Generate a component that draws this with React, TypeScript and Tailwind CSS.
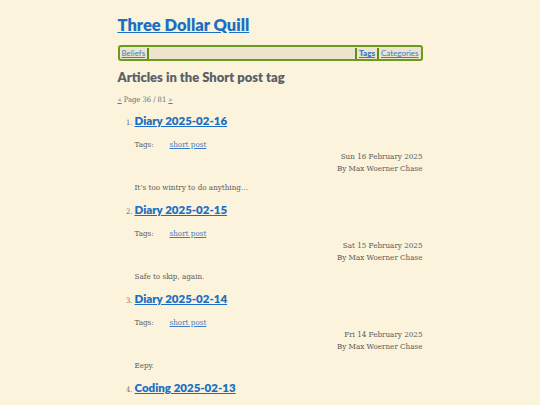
const posts = [
  { title: "Diary 2025-02-16", date: "Sun 16 February 2025", summary: "It’s too wintry to do anything…" },
  { title: "Diary 2025-02-15", date: "Sat 15 February 2025", summary: "Safe to skip, again." },
  { title: "Diary 2025-02-14", date: "Fri 14 February 2025", summary: "Eepy." },
  { title: "Coding 2025-02-13", date: "Thu 13 February 2025", summary: "Something." },
];

const head = { fontFamily: "Lato, 'Open Sans', sans-serif" };
const body = { fontFamily: "'DejaVu Serif', 'Liberation Serif', serif" };

export default function App() {
  return (
    <div className="min-h-[405px] bg-[#fbf3dc] text-[#585c60]">
      <div className="mx-auto w-[305px] pt-[14px]">
        {/* Site title */}
        <h1 style={head} className="text-[16.5px] leading-[22px] font-extrabold">
          <a href="#" className="text-[#1a6fc4] underline">Three Dollar Quill</a>
        </h1>

        {/* Nav */}
        <nav
          style={head}
          className="mt-[9px] flex items-center h-[16px] rounded-[3px] border-2 border-[#6a9a1f] bg-[#ece4cf] px-[2px] text-[8px] leading-[10px]"
        >
          <a href="#" className="text-[#3f7cc0] underline">Beliefs</a>
          <span className="ml-[2px] h-[11px] w-[2px] bg-[#5e8f17]" />
          <span className="flex-1" />
          <span className="mr-[2px] h-[11px] w-[2px] bg-[#5e8f17]" />
          <a href="#" className="font-extrabold text-[#3f7cc0] underline">Tags</a>
          <span className="mx-[2px] h-[11px] w-[2px] bg-[#5e8f17]" />
          <a href="#" className="text-[#3f7cc0] underline">Categories</a>
        </nav>

        <h2 style={head} className="mt-[8px] text-[13px] leading-[16px] font-extrabold text-[#5a6068]">
          Articles in the Short post tag
        </h2>

        <p style={body} className="mt-[10px] font-stretch-condensed text-[7.5px] leading-[10px] text-[#6b6f72]">
          <a href="#" className="text-[#3f7cc0] underline">«</a> Page 36 / 81{" "}
          <a href="#" className="text-[#3f7cc0] underline">»</a>
        </p>

        <ol className="mt-[7px]">
          {posts.map((p, i) => (
            <li key={p.title} className="flex">
              <span style={body} className="w-[17px] shrink-0 pt-[6px] pr-[2px] text-right font-stretch-condensed text-[7.5px] leading-[10px] text-[#6b6f72]">
                {i + 1}.
              </span>
              <div style={body} className="flex-1 font-stretch-condensed text-[8px]">
                <h3 style={head} className="text-[11.5px] leading-[18px] font-extrabold">
                  <a href="#" className="text-[#1a6fc4] underline">{p.title}</a>
                </h3>
                <div className="mt-[8px] flex leading-[13px]">
                  <span className="w-[35px]">Tags:</span>
                  <a href="#" className="text-[#3f7cc0] underline">short post</a>
                </div>
                <div className="text-right leading-[12px]">
                  <div>{p.date}</div>
                  <div>By Max Woerner Chase</div>
                </div>
                <p className="mt-[7px] leading-[12px]">{p.summary}</p>
                <div className="h-[7px]" />
              </div>
            </li>
          ))}
        </ol>
      </div>
    </div>
  );
}
